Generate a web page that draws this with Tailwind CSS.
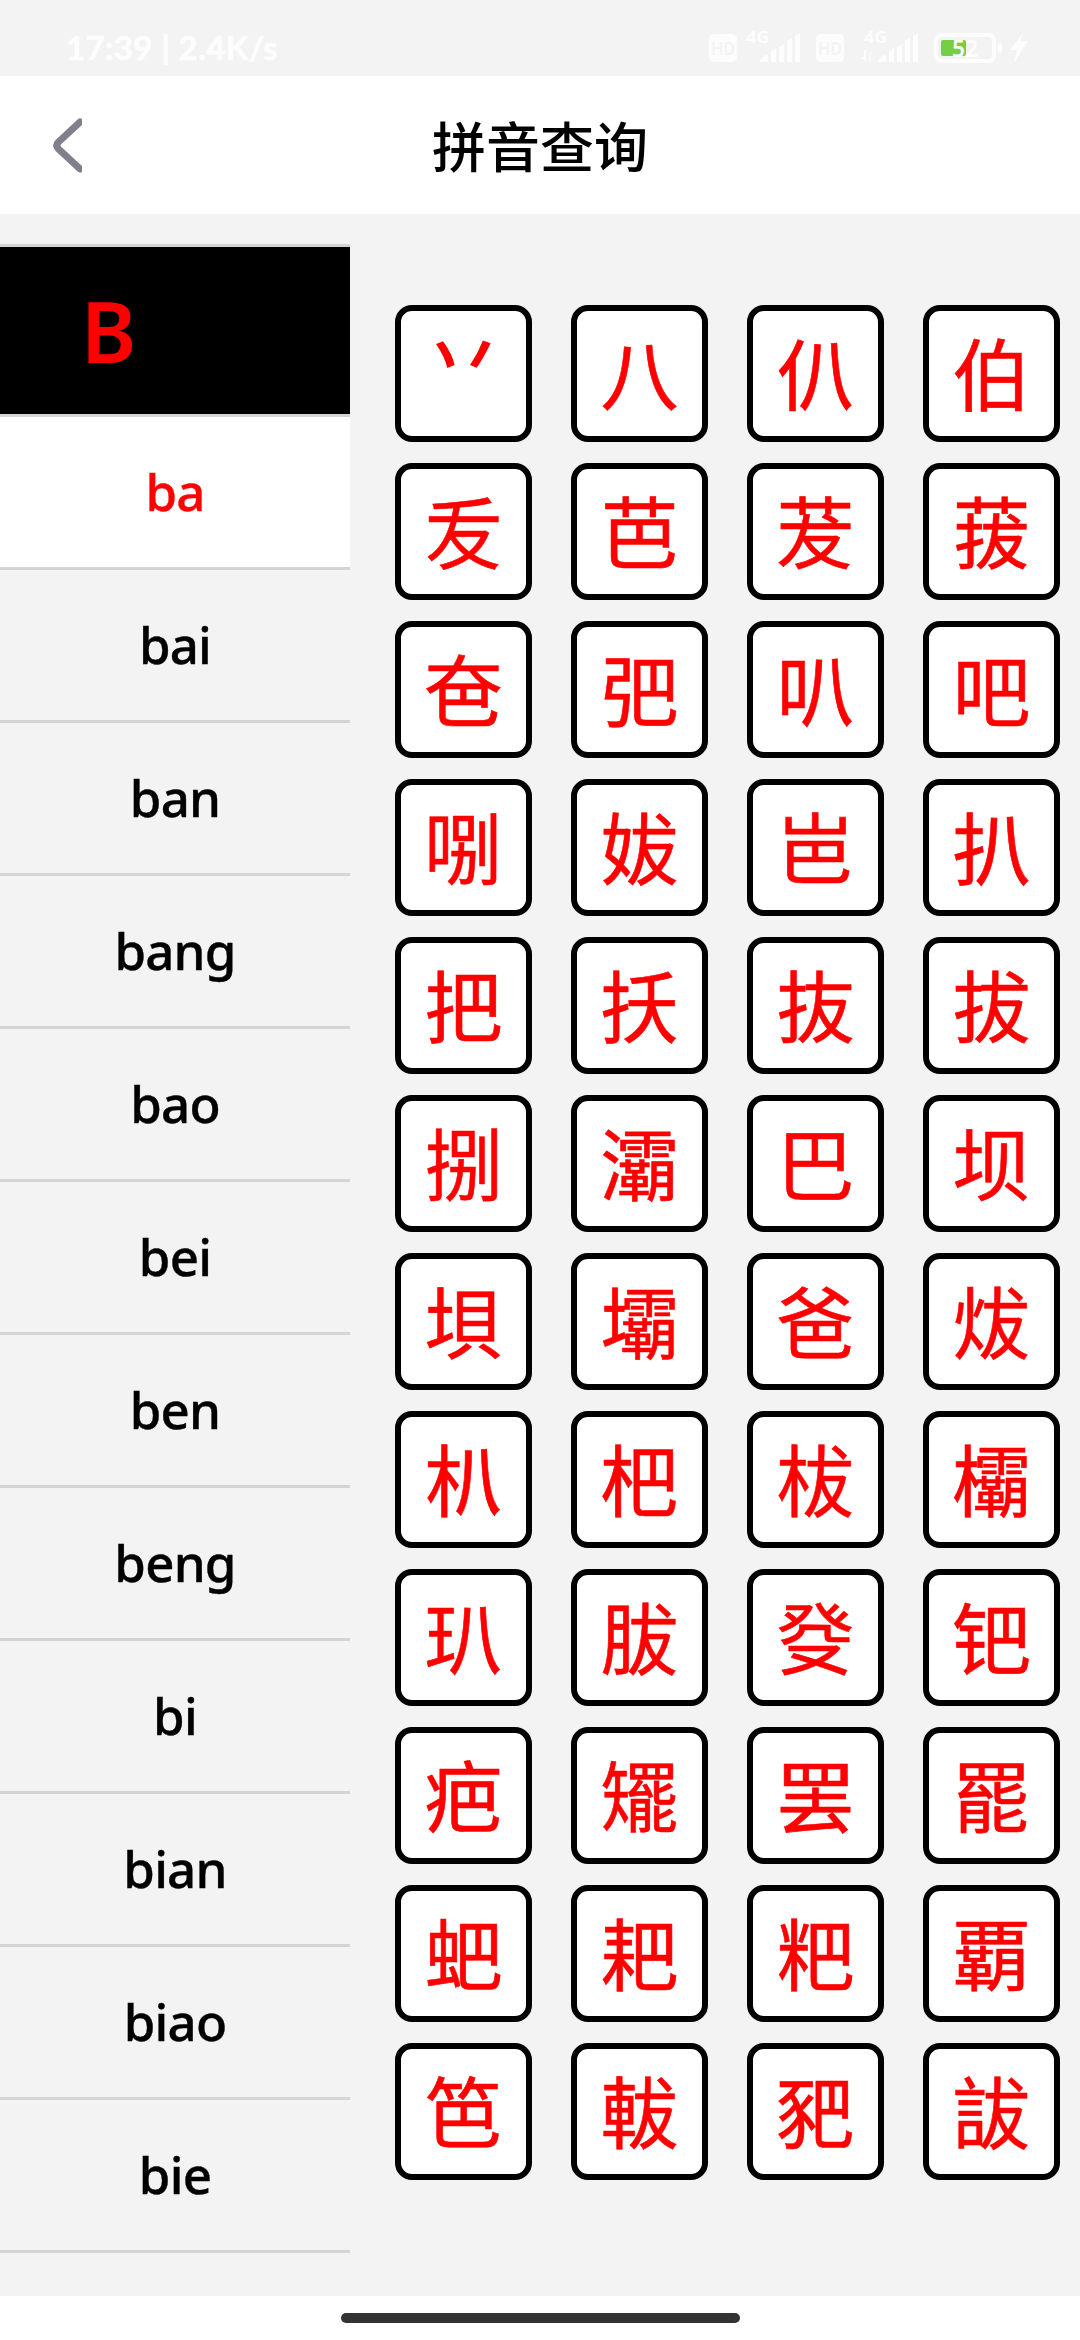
<!DOCTYPE html>
<html lang="zh-CN">
<head>
<meta charset="utf-8">
<title>拼音查询</title>
<script src="https://cdn.jsdelivr.net/npm/@tailwindcss/browser@4"></script>
</head>
<body class="flex h-[2340px] w-[1080px] flex-col overflow-hidden bg-[#f3f3f3] font-['Noto_Sans','Noto_Sans_CJK_SC',sans-serif] text-black">
<!-- Status bar -->
<div class="flex h-[76px] shrink-0 items-start justify-between pl-[66px]">
  <div class="mt-[24px] font-['Lato','Noto_Sans',sans-serif] text-[33px] leading-[46px] font-bold tracking-[0.35px] whitespace-nowrap text-[#fdfdfd] [-webkit-text-stroke:0.7px_#fdfdfd]">17:39 | 2.4K/s</div>
  <svg class="h-[76px] w-[380px]" viewBox="700 0 380 76" fill="#fdfdfd">
    <rect x="709" y="34" width="28" height="28" rx="5"/>
    <text x="723" y="55" text-anchor="middle" textLength="24" lengthAdjust="spacingAndGlyphs" font-family="Noto Sans" font-weight="600" font-size="18" fill="#f3f3f3">HD</text>
    <text x="746" y="43" textLength="23" lengthAdjust="spacingAndGlyphs" font-family="Noto Sans" font-weight="700" font-size="16.5">4G</text>
    <path d="M760 62v-2l6-5h2v7zM771 62v-10l5-4v14zM779 62v-15l5-3v18zM787 62v-21l5-3v24zM795 62v-26l5-3v29z"/>
    <rect x="816" y="34" width="28" height="28" rx="5"/>
    <text x="830" y="55" text-anchor="middle" textLength="24" lengthAdjust="spacingAndGlyphs" font-family="Noto Sans" font-weight="600" font-size="18" fill="#f3f3f3">HD</text>
    <text x="864" y="43" textLength="23" lengthAdjust="spacingAndGlyphs" font-family="Noto Sans" font-weight="700" font-size="16.5">4G</text>
    <path d="M864 50h2v12l-5-5h3z"/>
    <path d="M869 62V50l4 5h-2v7z" fill="#f8f8f8"/>
    <path d="M878 62v-2l6-5h2v7zM889 62v-10l5-4v14zM897 62v-15l5-3v18zM905 62v-21l5-3v24zM913 62v-26l5-3v29z"/>
    <rect x="936" y="35" width="58" height="26" rx="6" fill="none" stroke="#fdfdfd" stroke-width="4"/>
    <rect x="998" y="43" width="4" height="10" rx="2"/>
    <rect x="941" y="40" width="25" height="16" rx="2" fill="#76cf40"/>
    <text x="952" y="57" textLength="26" lengthAdjust="spacingAndGlyphs" font-family="Noto Sans" font-weight="600" font-size="23">52</text>
    <path d="M1023 33l-13 17h7l-3 13 14-22h-8z"/>
  </svg>
</div>
<!-- Header -->
<header class="grid h-[138px] shrink-0 grid-cols-[1fr_auto_1fr] items-center bg-white">
  <svg class="ml-[50px] h-[60px] w-[32px]" viewBox="50 115 32 60" fill="none" stroke="#80808c" stroke-width="7" stroke-linecap="round" stroke-linejoin="round"><path d="M80 122L58.500 142Q55 145.500 58.500 149L80 169"/></svg>
  <h1 class="font-['Noto_Sans_CJK_SC',sans-serif] text-[54px] leading-[80px] font-medium">拼音查询</h1>
</header>
<!-- Syllable list and characters -->
<main class="flex h-[2082px] shrink-0">
  <nav class="mt-[30px] w-[350px] border-t-[3px] border-[#d4d4d4]">
    <div class="flex h-[170px] items-center border-b-[3px] border-[#d4d4d4] bg-black pl-[81px] text-[84px] leading-none font-semibold text-[#ff0000]">B</div>
    <div id="syllables"></div>
  </nav>
  <section id="chars" class="mt-[91px] ml-[45px] grid grid-cols-4 content-start gap-x-[39px] gap-y-[21px]"></section>
</main>
<!-- Gesture bar -->
<footer class="flex h-[44px] shrink-0 justify-center bg-white pt-[17px]">
  <div class="h-[10px] w-[399px] rounded-full bg-[#333333]"></div>
</footer>
<script>
const syllables = 'ba bai ban bang bao bei ben beng bi bian biao bie'.split(' ');
document.getElementById('syllables').innerHTML = syllables.map((s, i) =>
  `<div class="${i === 0 ? 'bg-white text-[#ff0000]' : ''} flex h-[153px] items-center justify-center border-b-[3px] border-[#d4d4d4] pb-[2px] text-[51px] leading-[70px] font-medium tracking-[-0.8px] [-webkit-text-stroke:0.4px_currentColor]">${s}</div>`).join('');
const chars = [...'丷八仈伯叐芭茇菝夿弝叭吧哵妭岜扒把扷抜拔捌灞巴坝垻壩爸炦朳杷柭欛玐胈癹钯疤矲罢罷蚆耙粑覇笆軷豝詙'];
document.getElementById('chars').innerHTML = chars.map((c, i) =>
  `<div class="${i === 0 ? 'pb-[44px] [-webkit-text-stroke:1.6px_#ff0000]' : 'pb-[6px] [-webkit-text-stroke:0.6px_#ff0000]'} flex size-[137px] items-center justify-center rounded-[17px] border-[6px] border-black bg-white font-['Noto_Sans_CJK_SC',sans-serif] text-[78px] leading-[80px] text-[#ff0000]">${c}</div>`).join('');
</script>
</body>
</html>
